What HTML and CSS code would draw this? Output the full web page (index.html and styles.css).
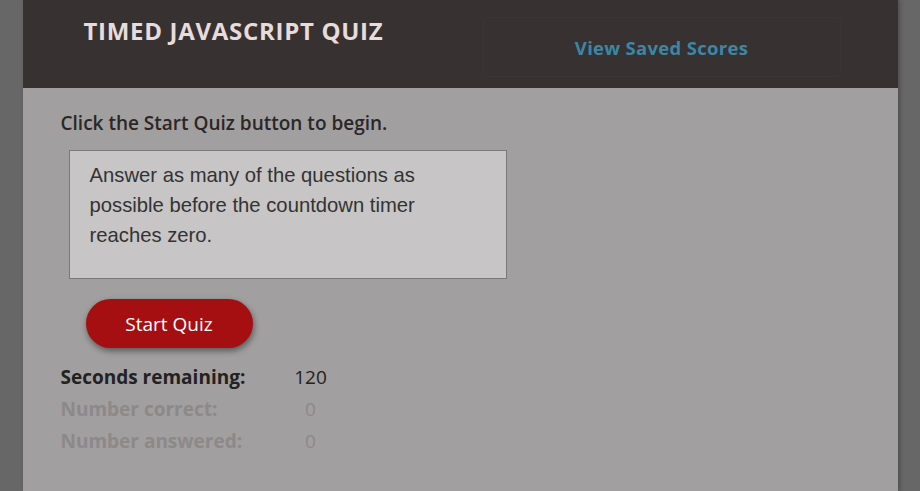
FILE: index.html
```html
<!DOCTYPE html>
<html>
<head>
<meta charset="utf-8">
<link rel="stylesheet" href="styles.css">
</head>
<body>
<div class="page">
  <header class="header">
    <h1 class="title">TIMED JAVASCRIPT QUIZ</h1>
    <nav class="nav"><a class="nav-link" href="#">View Saved Scores</a></nav>
  </header>
  <main class="main">
    <p class="intro">Click the Start Quiz button to begin.</p>
    <div class="info-box">Answer as many of the questions as possible before the countdown timer reaches zero.</div>
    <button class="start-btn">Start Quiz</button>
    <div class="stats">
      <div class="stat active"><span class="label">Seconds remaining:</span><span class="value">120</span></div>
      <div class="stat"><span class="label">Number correct:</span><span class="value">0</span></div>
      <div class="stat"><span class="label">Number answered:</span><span class="value">0</span></div>
    </div>
  </main>
</div>
</body>
</html>
```
FILE: styles.css
```css
html, body {
  margin: 0;
  padding: 0;
  height: 100%;
}
body {
  background: #676767;
  font-family: "Open Sans", "Noto Sans", sans-serif;
  overflow: hidden;
}
.page {
  width: 875px;
  margin: 0 auto;
  min-height: 100%;
  background: #a19f9f;
  box-shadow: 2px 0 4px rgba(0,0,0,0.25);
}
.header {
  background: #373131;
  height: 88px;
  display: flex;
  align-items: flex-start;
}
.title {
  margin: 0;
  padding: 16px 0 0 61px;
  width: 460px;
  box-sizing: border-box;
  font-size: 24px;
  font-weight: 700;
  letter-spacing: 0.7px;
  color: #e6dcdc;
  line-height: 30px;
}
.nav {
  margin-top: 17px;
  width: 358px;
  height: 60px;
  border: 1px solid #3b3535;
  border-radius: 4px;
  box-sizing: border-box;
  display: flex;
  justify-content: center;
  padding-top: 18px;
}
.nav-link {
  color: #3a87a6;
  font-weight: 700;
  font-size: 18.5px;
  text-decoration: none;
  letter-spacing: 0.3px;
  line-height: 24px;
}
.main {
  padding: 22px 0 30px 38px;
}
.intro {
  margin: 0;
  font-size: 19px;
  font-weight: 600;
  color: #2b2727;
  line-height: 26px;
}
.info-box {
  margin: 14px 0 0 8px;
  width: 438px;
  height: 129px;
  box-sizing: border-box;
  background: #c7c5c5;
  border: 1px solid #7b7878;
  padding: 9px 40px 0 20px;
  font-family: "Liberation Sans", Arial, sans-serif;
  font-size: 20.25px;
  line-height: 30px;
  color: #333;
}
.start-btn {
  display: block;
  margin: 20px 0 0 25px;
  width: 167px;
  height: 49px;
  border: none;
  border-radius: 25px;
  background: #a50f11;
  color: #fff;
  font-family: "Open Sans", "Noto Sans", sans-serif;
  font-size: 19px;
  box-shadow: 1px 3px 6px rgba(0,0,0,0.45);
}
.stats {
  margin-top: 13px;
}
.stat {
  display: flex;
  height: 32px;
  align-items: center;
  font-size: 19px;
  color: #8c8989;
}
.label {
  width: 215px;
  font-weight: 700;
}
.value {
  width: 70px;
  text-align: center;
}
.stat.active {
  color: #222;
}
```
